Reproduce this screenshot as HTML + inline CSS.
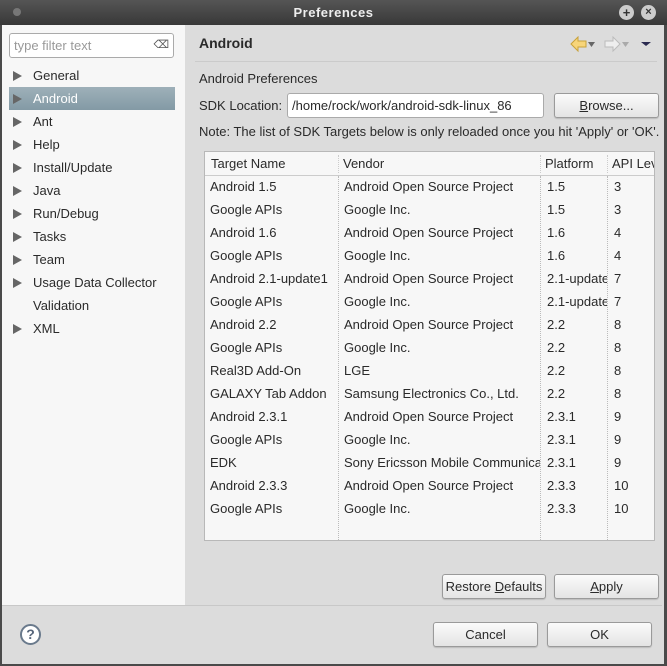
<!DOCTYPE html>
<html><head><style>
*{margin:0;padding:0;box-sizing:border-box}
body{width:667px;height:666px;overflow:hidden;background:#dcdcdc;font-family:"Liberation Sans","DejaVu Sans",sans-serif;font-size:13px;color:#2a2a2a;position:relative}
.abs{position:absolute}
#title{left:0;top:0;width:667px;height:25px;background:linear-gradient(#555,#383838);color:#eee;font-weight:bold;text-align:center;line-height:25px;font-size:13px;letter-spacing:.5px}
#frame{left:0;top:25px;width:667px;height:641px;border-left:2px solid #4a4a4a;border-right:3px solid #4a4a4a;border-bottom:2px solid #4a4a4a}
#left{left:2px;top:25px;width:183px;height:580px;background:#f7f7f7}
.filter{left:9px;top:33px;width:165px;height:25px;background:#fff;border:1px solid #aaa;border-radius:3px;color:#999;padding-left:4px;line-height:23px}
.item{left:9px;width:166px;height:23px;line-height:23px;padding-left:24px}
.item .tri{position:absolute;left:4px;top:7px;width:0;height:0;border-left:9px solid #666;border-top:5px solid transparent;border-bottom:5px solid transparent}
.sel{background:linear-gradient(#9eb0b9,#839aa5);color:#fff}
.btn{height:25px;border:1px solid #9a9a9a;border-radius:3px;background:linear-gradient(#fbfbfb,#e4e4e4);text-align:center;line-height:23px;box-shadow:0 1px 1px rgba(0,0,0,.15)}
#table{left:204px;top:151px;width:451px;height:390px;background:#f7f7f7;border:1px solid #b8b8b8}
.hdr{position:absolute;top:0;height:24px;line-height:23px;border-bottom:1px solid #ccc;background:#f7f7f7}
.row{position:absolute;left:0;width:449px;height:23px;line-height:23px}
.c{position:absolute;white-space:nowrap;overflow:hidden}
.vl{position:absolute;top:24px;height:364px;border-left:1px dotted #bbb}
</style></head><body>
<div id="title" class="abs">Preferences</div>
<div class="abs" style="left:13px;top:8px;width:8px;height:8px;border-radius:50%;background:#777"></div>
<div class="abs" style="left:619px;top:5px;width:15px;height:15px;border-radius:50%;background:#ccc;color:#333;font-size:13px;line-height:15px;text-align:center;font-weight:bold">+</div>
<div class="abs" style="left:641px;top:5px;width:15px;height:15px;border-radius:50%;background:#ccc;color:#333;font-size:11px;line-height:15px;text-align:center;font-weight:bold">×</div>
<div id="frame" class="abs"></div>
<div id="left" class="abs"></div>
<div class="abs filter">type filter text<span style="position:absolute;right:4px;top:0;color:#555;font-size:11px">⌫</span></div>
<div class="abs item" style="top:64px"><span class="tri"></span>General</div>
<div class="abs item sel" style="top:87px"><span class="tri"></span>Android</div>
<div class="abs item" style="top:110px"><span class="tri"></span>Ant</div>
<div class="abs item" style="top:133px"><span class="tri"></span>Help</div>
<div class="abs item" style="top:156px"><span class="tri"></span>Install/Update</div>
<div class="abs item" style="top:179px"><span class="tri"></span>Java</div>
<div class="abs item" style="top:202px"><span class="tri"></span>Run/Debug</div>
<div class="abs item" style="top:225px"><span class="tri"></span>Tasks</div>
<div class="abs item" style="top:248px"><span class="tri"></span>Team</div>
<div class="abs item" style="top:271px"><span class="tri"></span>Usage Data Collector</div>
<div class="abs item" style="top:294px">Validation</div>
<div class="abs item" style="top:317px"><span class="tri"></span>XML</div>

<div class="abs" style="left:199px;top:35px;font-weight:bold;font-size:14px">Android</div>
<svg class="abs" style="left:570px;top:36px" width="85" height="18">
<path d="M1 8 L8 1 L8 5 L16 5 L16 11 L8 11 L8 15 Z" fill="#f7d57a" stroke="#c9a23a"/>
<path d="M18 6 L25 6 L21.5 11 Z" fill="#666"/>
<path d="M50 8 L43 1 L43 5 L35 5 L35 11 L43 11 L43 15 Z" fill="#eee" stroke="#bbb"/>
<path d="M52 6 L59 6 L55.5 11 Z" fill="#aaa"/>
<path d="M71 6 L81 6 L76 10 Z" fill="#2a2a50"/>
</svg>
<div class="abs" style="left:195px;top:61px;width:462px;border-top:1px solid #cbcbcb"></div>
<div class="abs" style="left:199px;top:71px">Android Preferences</div>
<div class="abs" style="left:199px;top:98px">SDK Location:</div>
<div class="abs" style="left:287px;top:93px;width:257px;height:25px;background:#fff;border:1px solid #aaa;border-radius:3px;padding-left:4px;line-height:23px">/home/rock/work/android-sdk-linux_86</div>
<div class="abs btn" style="left:554px;top:93px;width:105px"><u>B</u>rowse...</div>
<div class="abs" style="left:199px;top:124px">Note: The list of SDK Targets below is only reloaded once you hit 'Apply' or 'OK'.</div>

<div id="table" class="abs">
<div class="hdr" style="left:0;width:449px"></div>
<div class="c" style="left:6px;top:4px">Target Name</div>
<div class="c" style="left:138px;top:4px">Vendor</div>
<div class="c" style="left:340px;top:4px">Platform</div>
<div class="c" style="left:407px;top:4px;width:42px">API Level</div>
<div style="position:absolute;left:133px;top:3px;height:18px;border-left:1px dotted #ccc"></div>
<div style="position:absolute;left:335px;top:3px;height:18px;border-left:1px dotted #ccc"></div>
<div style="position:absolute;left:402px;top:3px;height:18px;border-left:1px dotted #ccc"></div>
<div class="vl" style="left:133px"></div><div class="vl" style="left:335px"></div><div class="vl" style="left:402px"></div>
</div>
<div class="abs" style="left:204px;top:175px;width:451px;font-size:13px">
<div style="position:relative">
<div class="row" style="top:0"><span class="c" style="left:6px">Android 1.5</span><span class="c" style="left:140px">Android Open Source Project</span><span class="c" style="left:343px">1.5</span><span class="c" style="left:410px">3</span></div>
<div class="row" style="top:23px"><span class="c" style="left:6px">Google APIs</span><span class="c" style="left:140px">Google Inc.</span><span class="c" style="left:343px">1.5</span><span class="c" style="left:410px">3</span></div>
<div class="row" style="top:46px"><span class="c" style="left:6px">Android 1.6</span><span class="c" style="left:140px">Android Open Source Project</span><span class="c" style="left:343px">1.6</span><span class="c" style="left:410px">4</span></div>
<div class="row" style="top:69px"><span class="c" style="left:6px">Google APIs</span><span class="c" style="left:140px">Google Inc.</span><span class="c" style="left:343px">1.6</span><span class="c" style="left:410px">4</span></div>
<div class="row" style="top:92px"><span class="c" style="left:6px;width:128px">Android 2.1-update1</span><span class="c" style="left:140px">Android Open Source Project</span><span class="c" style="left:343px;width:60px">2.1-update1</span><span class="c" style="left:410px">7</span></div>
<div class="row" style="top:115px"><span class="c" style="left:6px">Google APIs</span><span class="c" style="left:140px">Google Inc.</span><span class="c" style="left:343px;width:60px">2.1-update1</span><span class="c" style="left:410px">7</span></div>
<div class="row" style="top:138px"><span class="c" style="left:6px">Android 2.2</span><span class="c" style="left:140px">Android Open Source Project</span><span class="c" style="left:343px">2.2</span><span class="c" style="left:410px">8</span></div>
<div class="row" style="top:161px"><span class="c" style="left:6px">Google APIs</span><span class="c" style="left:140px">Google Inc.</span><span class="c" style="left:343px">2.2</span><span class="c" style="left:410px">8</span></div>
<div class="row" style="top:184px"><span class="c" style="left:6px">Real3D Add-On</span><span class="c" style="left:140px">LGE</span><span class="c" style="left:343px">2.2</span><span class="c" style="left:410px">8</span></div>
<div class="row" style="top:207px"><span class="c" style="left:6px">GALAXY Tab Addon</span><span class="c" style="left:140px">Samsung Electronics Co., Ltd.</span><span class="c" style="left:343px">2.2</span><span class="c" style="left:410px">8</span></div>
<div class="row" style="top:230px"><span class="c" style="left:6px">Android 2.3.1</span><span class="c" style="left:140px">Android Open Source Project</span><span class="c" style="left:343px">2.3.1</span><span class="c" style="left:410px">9</span></div>
<div class="row" style="top:253px"><span class="c" style="left:6px">Google APIs</span><span class="c" style="left:140px">Google Inc.</span><span class="c" style="left:343px">2.3.1</span><span class="c" style="left:410px">9</span></div>
<div class="row" style="top:276px"><span class="c" style="left:6px">EDK</span><span class="c" style="left:140px;width:196px">Sony Ericsson Mobile Communications</span><span class="c" style="left:343px">2.3.1</span><span class="c" style="left:410px">9</span></div>
<div class="row" style="top:299px"><span class="c" style="left:6px">Android 2.3.3</span><span class="c" style="left:140px">Android Open Source Project</span><span class="c" style="left:343px">2.3.3</span><span class="c" style="left:410px">10</span></div>
<div class="row" style="top:322px"><span class="c" style="left:6px">Google APIs</span><span class="c" style="left:140px">Google Inc.</span><span class="c" style="left:343px">2.3.3</span><span class="c" style="left:410px">10</span></div>
</div></div>

<div class="abs btn" style="left:442px;top:574px;width:104px">Restore <u>D</u>efaults</div>
<div class="abs btn" style="left:554px;top:574px;width:105px"><u>A</u>pply</div>
<div class="abs" style="left:2px;top:605px;width:660px;border-top:1px solid #c8c8c8"></div>
<div class="abs" style="left:20px;top:624px;width:21px;height:21px;border-radius:50%;border:2px solid #6a7a8c;background:#fff;text-align:center;line-height:17px;font-weight:bold;color:#56657a;font-size:14px">?</div>
<div class="abs btn" style="left:433px;top:622px;width:105px">Cancel</div>
<div class="abs btn" style="left:547px;top:622px;width:105px">OK</div>
</body></html>
